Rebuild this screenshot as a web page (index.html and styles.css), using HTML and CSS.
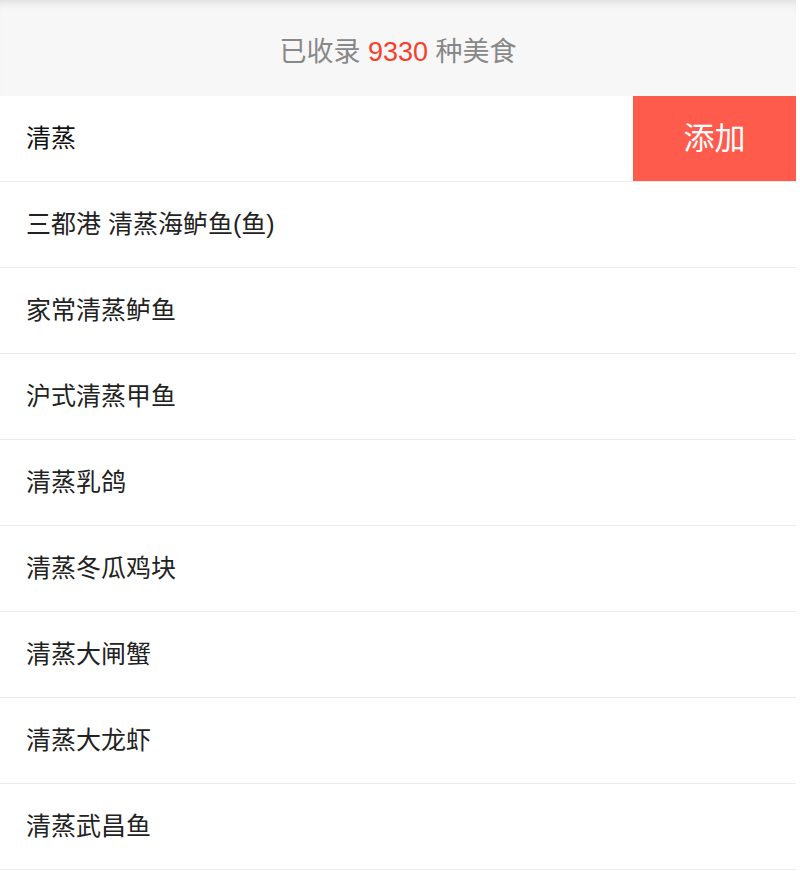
FILE: index.html
```html
<!DOCTYPE html>
<html lang="zh">
<head>
<meta charset="utf-8">
<link rel="stylesheet" href="styles.css">
</head>
<body>
<div class="page">
  <header class="summary">已收录 <span class="count">9330</span> 种美食</header>
  <div class="search">
    <div class="query">清蒸</div>
    <button class="add">添加</button>
  </div>
  <ul class="list">
    <li class="item">三都港 清蒸海鲈鱼(鱼)</li>
    <li class="item">家常清蒸鲈鱼</li>
    <li class="item">沪式清蒸甲鱼</li>
    <li class="item">清蒸乳鸽</li>
    <li class="item">清蒸冬瓜鸡块</li>
    <li class="item">清蒸大闸蟹</li>
    <li class="item">清蒸大龙虾</li>
    <li class="item">清蒸武昌鱼</li>
  </ul>
</div>
</body>
</html>
```
FILE: styles.css
```css
html, body {
  margin: 0;
  padding: 0;
  background: #ffffff;
}
body {
  font-family: "Liberation Sans", "Noto Sans CJK SC", sans-serif;
  color: #222;
}
.page {
  width: 796px;
}
.summary {
  height: 96px;
  box-sizing: border-box;
  padding-top: 9px;
  display: flex;
  align-items: center;
  justify-content: center;
  background: #f7f7f7;
  box-shadow: inset 0 8px 8px -6px rgba(0,0,0,0.12);
  font-size: 27px;
  line-height: 1;
  color: #888;
  white-space: pre;
}
.count {
  color: #f5402c;
}
.search {
  display: flex;
  height: 85px;
  border-bottom: 1px solid #ececec;
}
.query {
  flex: 1;
  display: flex;
  align-items: center;
  padding-left: 26px;
  font-size: 25px;
  line-height: 1;
  color: #111;
}
.add {
  width: 163px;
  border: none;
  margin: 0;
  padding: 0;
  background: #ff5b4d;
  color: #fff;
  font-family: inherit;
  font-size: 31px;
  line-height: 1;
}
.list {
  list-style: none;
  margin: 0;
  padding: 0;
}
.item {
  height: 85px;
  display: flex;
  align-items: center;
  padding-left: 26px;
  font-size: 25px;
  line-height: 1;
  color: #222;
  border-bottom: 1px solid #ececec;
}
```
